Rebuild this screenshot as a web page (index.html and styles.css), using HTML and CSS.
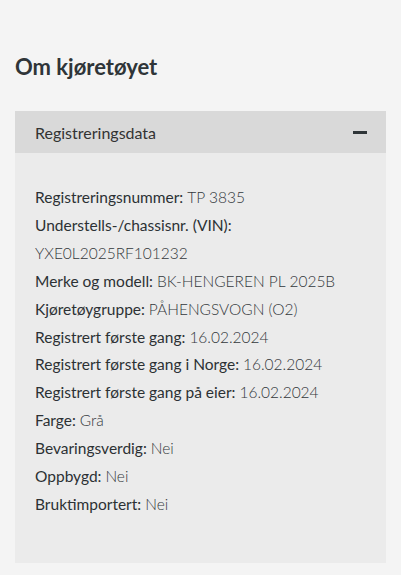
FILE: index.html
```html
<!DOCTYPE html>
<html lang="no">
<head>
<meta charset="utf-8">
<title>Om kjøretøyet</title>
<link rel="stylesheet" href="styles.css">
</head>
<body>
<main class="page">
  <h2 class="title">Om kjøretøyet</h2>
  <section class="card">
    <div class="card-header">
      <span class="card-title">Registreringsdata</span>
      <span class="minus" aria-hidden="true"></span>
    </div>
    <dl class="card-body">
      <div class="row"><dt>Registreringsnummer:</dt> <dd>TP 3835</dd></div>
      <div class="row"><dt>Understells-/chassisnr. (VIN):</dt></div>
      <div class="row"><dd>YXE0L2025RF101232</dd></div>
      <div class="row"><dt>Merke og modell:</dt> <dd>BK-HENGEREN PL 2025B</dd></div>
      <div class="row"><dt>Kjøretøygruppe:</dt> <dd>PÅHENGSVOGN (O2)</dd></div>
      <div class="row"><dt>Registrert første gang:</dt> <dd>16.02.2024</dd></div>
      <div class="row"><dt>Registrert første gang i Norge:</dt> <dd>16.02.2024</dd></div>
      <div class="row"><dt>Registrert første gang på eier:</dt> <dd>16.02.2024</dd></div>
      <div class="row"><dt>Farge:</dt> <dd>Grå</dd></div>
      <div class="row"><dt>Bevaringsverdig:</dt> <dd>Nei</dd></div>
      <div class="row"><dt>Oppbygd:</dt> <dd>Nei</dd></div>
      <div class="row"><dt>Bruktimportert:</dt> <dd>Nei</dd></div>
    </dl>
  </section>
</main>
</body>
</html>
```
FILE: styles.css
```css
html, body {
  margin: 0;
  padding: 0;
  background: #f4f4f4;
}
body {
  font-family: Lato, "Open Sans", sans-serif;
  color: #333;
}
.page {
  padding: 52px 15px 12px 15px;
}
.title {
  margin: 0;
  font-size: 22px;
  font-weight: 700;
  line-height: 30px;
  color: #2f3538;
}
.card {
  margin-top: 29px;
  width: 371px;
}
.card-header {
  height: 42px;
  background: #d9d9d9;
  display: flex;
  align-items: center;
  justify-content: space-between;
  padding: 0 19px 0 20px;
}
.card-title {
  font-size: 16px;
  color: #333;
}
.minus {
  width: 14px;
  height: 3px;
  background: #2f3538;
}
.card-body {
  margin: 0;
  background: #ebebeb;
  padding: 31px 20px 44px 20px;
  height: 335px;
  box-sizing: content-box;
}
.row {
  font-size: 15.5px;
  line-height: 27.9px;
  white-space: nowrap;
}
.row dt, .row dd {
  display: inline;
  margin: 0;
}
.row dt {
  font-weight: 400;
  color: #2c3134;
}
.row dd {
  font-weight: 300;
  color: #33383b;
}
```
